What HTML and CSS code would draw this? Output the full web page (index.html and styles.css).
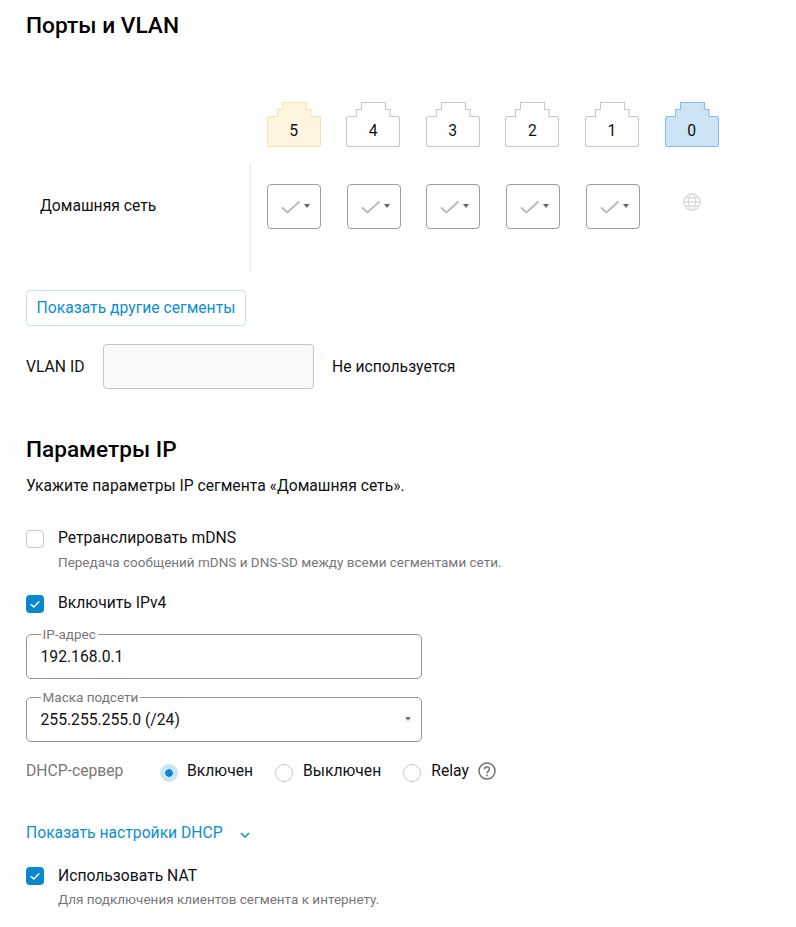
FILE: index.html
```html
<!DOCTYPE html>
<html lang="ru">
<head>
<meta charset="utf-8">
<title>Порты и VLAN</title>
<link rel="stylesheet" href="styles.css">
</head>
<body>
<svg class="defs" width="0" height="0" aria-hidden="true">
  <defs>
    <path id="port-shape" d="M0.5 16.5 a2 2 0 0 1 2 -2 H10.5 V7.5 H15.5 V0.5 H39.5 V7.5 H44 V14.5 H51.5 a2 2 0 0 1 2 2 V42.5 a2 2 0 0 1 -2 2 H2.5 a2 2 0 0 1 -2 -2 Z"/>
  </defs>
</svg>
<main class="page">
  <h1 class="title">Порты и VLAN</h1>

  <div class="ports">
    <div class="port port-yellow"><svg viewBox="0 0 54 45" width="54" height="45"><use href="#port-shape"/></svg><span class="port-num">5</span></div>
    <div class="port"><svg viewBox="0 0 54 45" width="54" height="45"><use href="#port-shape"/></svg><span class="port-num">4</span></div>
    <div class="port"><svg viewBox="0 0 54 45" width="54" height="45"><use href="#port-shape"/></svg><span class="port-num">3</span></div>
    <div class="port"><svg viewBox="0 0 54 45" width="54" height="45"><use href="#port-shape"/></svg><span class="port-num">2</span></div>
    <div class="port"><svg viewBox="0 0 54 45" width="54" height="45"><use href="#port-shape"/></svg><span class="port-num">1</span></div>
    <div class="port port-blue"><svg viewBox="0 0 54 45" width="54" height="45"><use href="#port-shape"/></svg><span class="port-num">0</span></div>
  </div>

  <div class="segment">
    <div class="segment-name">Домашняя сеть</div>
    <div class="segment-cells">
      <div class="port-select"><svg class="check-grey" viewBox="0 0 20 14" width="20" height="14"><path d="M1 7.5 L6.5 12.5 L18.5 1.5"/></svg><span class="mini-caret"></span></div>
      <div class="port-select"><svg class="check-grey" viewBox="0 0 20 14" width="20" height="14"><path d="M1 7.5 L6.5 12.5 L18.5 1.5"/></svg><span class="mini-caret"></span></div>
      <div class="port-select"><svg class="check-grey" viewBox="0 0 20 14" width="20" height="14"><path d="M1 7.5 L6.5 12.5 L18.5 1.5"/></svg><span class="mini-caret"></span></div>
      <div class="port-select"><svg class="check-grey" viewBox="0 0 20 14" width="20" height="14"><path d="M1 7.5 L6.5 12.5 L18.5 1.5"/></svg><span class="mini-caret"></span></div>
      <div class="port-select"><svg class="check-grey" viewBox="0 0 20 14" width="20" height="14"><path d="M1 7.5 L6.5 12.5 L18.5 1.5"/></svg><span class="mini-caret"></span></div>
      <div class="wan-cell">
        <svg class="globe" viewBox="0 0 18 18" width="18" height="18"><circle cx="9" cy="9" r="8.2"/><ellipse cx="9" cy="9" rx="3.6" ry="8.2"/><path d="M1 9 H17 M2.2 5 H15.8 M2.2 13 H15.8"/></svg>
      </div>
    </div>
  </div>

  <button class="outline-btn" type="button">Показать другие сегменты</button>

  <div class="vlan">
    <span class="vlan-label">VLAN ID</span>
    <div class="vlan-input"></div>
    <span class="vlan-state">Не используется</span>
  </div>

  <h2 class="subtitle">Параметры IP</h2>
  <p class="lead">Укажите параметры IP сегмента «Домашняя сеть».</p>

  <div class="check-row check-mdns">
    <span class="box"></span>
    <span class="check-label">Ретранслировать mDNS</span>
  </div>
  <p class="hint hint-mdns">Передача сообщений mDNS и DNS-SD между всеми сегментами сети.</p>

  <div class="check-row check-ipv4">
    <span class="box box-on"><svg viewBox="0 0 18 18" width="18" height="18"><path d="M4.8 9.2 L7.8 12 L13.2 6.4"/></svg></span>
    <span class="check-label">Включить IPv4</span>
  </div>

  <div class="field field-ip">
    <span class="field-legend">IP-адрес</span>
    <span class="field-value">192.168.0.1</span>
  </div>

  <div class="field field-mask">
    <span class="field-legend">Маска подсети</span>
    <span class="field-value">255.255.255.0 (/24)</span>
    <span class="select-caret"></span>
  </div>

  <div class="dhcp">
    <span class="dhcp-label">DHCP-сервер</span>
    <span class="radio radio-on"></span><span class="radio-label label-on">Включен</span>
    <span class="radio"></span><span class="radio-label label-off">Выключен</span>
    <span class="radio"></span><span class="radio-label label-relay">Relay</span>
    <svg class="help" viewBox="0 0 18 18" width="18" height="18"><circle cx="9" cy="9" r="8"/><path d="M6.6 7.2 a2.4 2.4 0 1 1 3.8 2 c-0.9 0.6 -1.4 1 -1.4 2.1"/><circle class="help-dot" cx="9" cy="13.4" r="0.9"/></svg>
  </div>

  <div class="dhcp-link">
    <span>Показать настройки DHCP</span>
    <svg viewBox="0 0 10 6" width="10" height="6"><path d="M1 1 L5 5 L9 1"/></svg>
  </div>

  <div class="check-row check-nat">
    <span class="box box-on"><svg viewBox="0 0 18 18" width="18" height="18"><path d="M4.8 9.2 L7.8 12 L13.2 6.4"/></svg></span>
    <span class="check-label">Использовать NAT</span>
  </div>
  <p class="hint hint-nat">Для подключения клиентов сегмента к интернету.</p>
</main>
</body>
</html>
```
FILE: styles.css
```css
* { box-sizing: border-box; }
html, body { margin: 0; padding: 0; background: #fff; }
body {
  font-family: Roboto, "Liberation Sans", sans-serif;
  font-size: 15.7px;
  line-height: 20px;
  color: #111;
}
.defs { position: absolute; }
.page { padding: 0 26px 20px; }

.title {
  margin: 13px 0 0;
  font-size: 22.7px;
  line-height: 26px;
  font-weight: 500;
  color: #000;
}

.ports {
  display: grid;
  grid-template-columns: repeat(6, 54px);
  column-gap: 25.6px;
  margin: 63px 0 0 240.6px;
}
.port { position: relative; width: 54px; height: 45px; }
.port svg { display: block; }
.port svg use { fill: #fff; stroke: #c8c6c6; stroke-width: 1.1; }
.port-yellow svg use { fill: #fdf5e0; stroke: #f8e3a8; }
.port-blue svg use { fill: #cde4f4; stroke: #7fc1ea; }
.port-num {
  position: absolute;
  left: 0;
  right: 0;
  top: 19px;
  text-align: center;
  color: #111;
}

.segment {
  display: flex;
  height: 107px;
  margin-top: 18px;
}
.segment-name {
  width: 225px;
  padding: 31px 0 0 14px;
  border-right: 1px solid #e6e6e6;
}
.segment-cells {
  display: grid;
  grid-template-columns: repeat(6, 54px);
  column-gap: 25.6px;
  align-items: start;
  padding: 19px 0 0 16.2px;
}
.port-select {
  display: flex;
  align-items: center;
  justify-content: center;
  gap: 3px;
  width: 54px;
  height: 45px;
  border: 1px solid #9a9ea2;
  border-radius: 4px;
  padding-left: 3px;
}
.check-grey path { fill: none; stroke: #bdbbbb; stroke-width: 2; }
.mini-caret {
  width: 0;
  height: 0;
  margin-top: -1px;
  border-left: 3.5px solid transparent;
  border-right: 3.5px solid transparent;
  border-top: 4px solid #666;
}
.wan-cell { padding: 9px 0 0 18px; }
.globe { display: block; }
.globe circle, .globe ellipse, .globe path { fill: none; stroke: #dcdcdc; stroke-width: 1.4; }

.outline-btn {
  display: block;
  width: 220px;
  height: 36px;
  margin: 18px 0 0;
  padding: 0;
  border: 1px solid #c3e0f2;
  border-radius: 4px;
  background: #fff;
  font: inherit;
  color: #0c8ed4;
}

.vlan {
  display: flex;
  align-items: center;
  height: 45px;
  margin-top: 18px;
}
.vlan-label { width: 77px; }
.vlan-input {
  width: 211px;
  height: 45px;
  background: #f9f9f9;
  border: 1px solid #c6c6c6;
  border-radius: 4px;
}
.vlan-state { margin-left: 18px; }

.subtitle {
  margin: 48px 0 0;
  font-size: 22.6px;
  line-height: 26px;
  font-weight: 500;
  color: #000;
}
.lead { margin: 13px 0 0; line-height: 20px; }

.check-row { display: flex; align-items: center; gap: 14px; height: 20px; }
.check-mdns { margin-top: 32px; }
.check-ipv4 { margin-top: 21px; }
.check-nat { margin-top: 23px; }
.box {
  flex: none;
  display: block;
  width: 18px;
  height: 18px;
  margin-top: 2px;
  border: 1px solid #c6c6c6;
  border-radius: 4px;
  background: #fff;
}
.check-nat .box { margin-top: 0; }
.box-on { border: 0; background: #0a87cd; }
.box-on svg { display: block; }
.box-on path { fill: none; stroke: #fff; stroke-width: 1.4; }

.hint {
  margin-left: 32px;
  margin-bottom: 0;
  font-size: 13.5px;
  line-height: 20px;
  color: #777;
}
.hint-mdns { margin-top: 4px; }
.hint-nat { margin-top: 3px; }

.field {
  position: relative;
  display: flex;
  align-items: center;
  width: 396px;
  height: 45px;
  padding-left: 13.5px;
  border: 1px solid #8f9398;
  border-radius: 5px;
}
.field-ip { margin-top: 21px; }
.field-mask { margin-top: 18px; }
.field-value { padding-top: 1px; }
.field-legend {
  position: absolute;
  left: 13.5px;
  top: -9px;
  padding: 0 2px;
  background: #fff;
  font-size: 13.5px;
  line-height: 16px;
  color: #777;
}
.select-caret {
  position: absolute;
  right: 10px;
  top: 19px;
  width: 0;
  height: 0;
  border-left: 3.5px solid transparent;
  border-right: 3.5px solid transparent;
  border-top: 4px solid #777;
}

.dhcp {
  display: flex;
  align-items: center;
  height: 20px;
  margin-top: 19px;
}
.dhcp-label { width: 134px; color: #777; }
.radio {
  flex: none;
  width: 18px;
  height: 18px;
  margin-top: 4px;
  border: 1px solid #c6c6c6;
  border-radius: 50%;
  background: #fff;
}
.radio-on {
  border: 0;
  background: radial-gradient(circle, #0a87cd 0 3.5px, #cde4f4 4px);
}
.radio-label { margin-left: 9px; }
.label-on { margin-right: 22px; }
.label-off { margin-left: 10px; margin-right: 22px; }
.label-relay { margin-left: 10px; }
.help { margin: -1px 0 0 9px; }
.help circle, .help path { fill: none; stroke: #6f6f6f; stroke-width: 1.5; }
.help .help-dot { fill: #6f6f6f; stroke: none; }

.dhcp-link {
  display: flex;
  align-items: center;
  gap: 17px;
  margin-top: 42px;
  color: #0c8ed4;
}
.dhcp-link svg { margin-top: 4px; }
.dhcp-link path { fill: none; stroke: #0c8ed4; stroke-width: 1.5; }
```
